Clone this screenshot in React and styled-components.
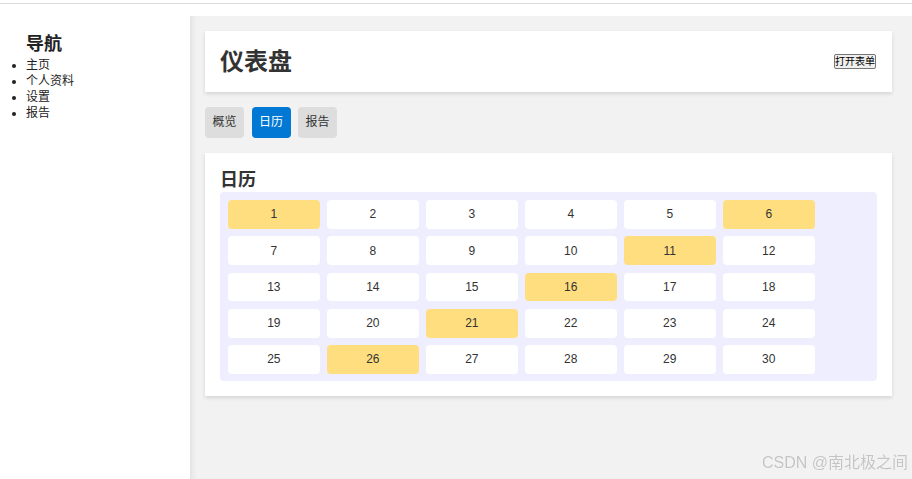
import React, { useState } from 'react';
import styled, { createGlobalStyle } from 'styled-components';

const GlobalStyle = createGlobalStyle`
    html, body {
        margin: 0;
        padding: 0;
        background: #fff;
        font-family: "Liberation Sans", Arial, "Noto Sans CJK SC", sans-serif;
        color: #333;
    }
`;

const TopLine = styled.div`
    height: 3px;
    border-bottom: 1px solid #dcdcdc;
`;

const Layout = styled.div`
    display: flex;
    min-height: calc(100vh - 4px);
`;

const Sidebar = styled.nav`
    width: 190px;
    flex-shrink: 0;
    padding: 29px 0 0 26px;
    box-sizing: border-box;
    background: #fff;
`;

const NavTitle = styled.h2`
    margin: 0 0 2px 0;
    font-size: 18px;
    line-height: 22px;
    font-weight: bold;
    color: #222;
`;

const NavList = styled.ul`
    margin: 0;
    padding: 0;
    font-size: 12px;
    color: #222;

    li {
        height: 16px;
        line-height: 16px;
    }
`;

const Main = styled.main`
    flex: 1;
    margin-top: 12px;
    padding: 15px 20px 15px 15px;
    background: #f2f2f2;
    box-shadow: inset 6px 0 6px -4px rgba(0, 0, 0, 0.08);
    display: flex;
    flex-direction: column;
    gap: 15px;
`;

const Card = styled.section`
    background: #fff;
    padding: 15px;
    box-shadow: 0 2px 4px rgba(0, 0, 0, 0.12);
`;

const Header = styled(Card)`
    display: flex;
    justify-content: space-between;
    align-items: center;
`;

const Title = styled.h1`
    margin: 0;
    font-size: 24px;
    line-height: 31px;
    font-weight: bold;
    color: #333;
`;

const FormButton = styled.button`
    font-family: inherit;
    font-size: 10px;
    height: 15px;
    line-height: 13px;
    padding: 0;
    margin: 0 1px 0 0;
    border: 1px solid #767676;
    border-radius: 2px;
    background: #efefef;
    color: #000;
`;

const Tabs = styled.div`
    display: flex;
    gap: 7.5px;
`;

const Tab = styled.button`
    font-family: inherit;
    font-size: 12px;
    line-height: 15px;
    padding: 8px 7.5px;
    border: none;
    border-radius: 4px;
    background: ${p => (p.active ? '#0078d4' : '#dddddd')};
    color: ${p => (p.active ? '#fff' : '#333')};
    cursor: pointer;
`;

const SubTitle = styled.h3`
    margin: 0;
    font-size: 18px;
    line-height: 24px;
    font-weight: bold;
    color: #333;
`;

const Grid = styled.div`
    display: grid;
    grid-template-columns: repeat(6, 91.7px);
    grid-auto-rows: 28.7px;
    column-gap: 7.3px;
    row-gap: 7.6px;
    padding: 8px 8px 7px 8px;
    background: #eeeeff;
    border-radius: 4px;
`;

const Day = styled.div`
    display: flex;
    align-items: center;
    justify-content: center;
    font-size: 12px;
    color: #333;
    border-radius: 4px;
    background: ${p => (p.marked ? '#ffde7f' : '#fff')};
`;

const Watermark = styled.div`
    position: fixed;
    right: 4px;
    bottom: 6px;
    font-size: 16px;
    color: #c4c4c4;
    text-shadow: 0 0 1px #fff;
    pointer-events: none;
`;

const tabs = ['概览', '日历', '报告'];
const days = Array.from({ length: 30 }, (_, i) => i + 1);

function App() {
    const [tab, setTab] = useState('日历');

    return (
        <>
            <GlobalStyle />
            <TopLine />
            <Layout>
                <Sidebar>
                    <NavTitle>导航</NavTitle>
                    <NavList>
                        <li>主页</li>
                        <li>个人资料</li>
                        <li>设置</li>
                        <li>报告</li>
                    </NavList>
                </Sidebar>
                <Main>
                    <Header>
                        <Title>仪表盘</Title>
                        <FormButton>打开表单</FormButton>
                    </Header>
                    <Tabs>
                        {tabs.map(t => (
                            <Tab key={t} active={t === tab} onClick={() => setTab(t)}>
                                {t}
                            </Tab>
                        ))}
                    </Tabs>
                    <Card>
                        <SubTitle>日历</SubTitle>
                        <Grid>
                            {days.map(d => (
                                <Day key={d} marked={d % 5 === 1}>
                                    {d}
                                </Day>
                            ))}
                        </Grid>
                    </Card>
                </Main>
            </Layout>
            <Watermark>CSDN @南北极之间</Watermark>
        </>
    );
}

export default App;
